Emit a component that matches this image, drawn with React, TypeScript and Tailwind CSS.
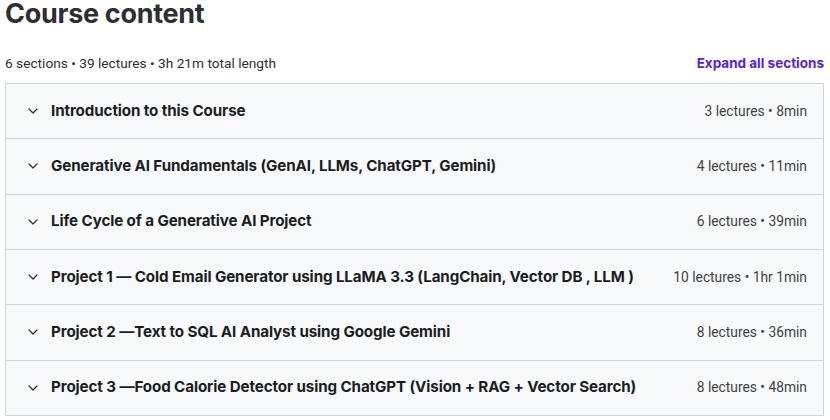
import React from 'react';

const sections = [
  { title: 'Introduction to this Course', meta: '3 lectures • 8min' },
  { title: 'Generative AI Fundamentals (GenAI, LLMs, ChatGPT, Gemini)', meta: '4 lectures • 11min' },
  { title: 'Life Cycle of a Generative AI Project', meta: '6 lectures • 39min' },
  { title: 'Project 1 — Cold Email Generator using LLaMA 3.3 (LangChain, Vector DB , LLM )', meta: '10 lectures • 1hr 1min' },
  { title: 'Project 2 —Text to SQL AI Analyst using Google Gemini', meta: '8 lectures • 36min' },
  { title: 'Project 3 —Food Calorie Detector using ChatGPT (Vision + RAG + Vector Search)', meta: '8 lectures • 48min' },
];

function Chevron() {
  return (
    <svg width="10" height="6" viewBox="0 0 10 6" fill="none" className="shrink-0">
      <path d="M1 1l4 4 4-4" stroke="#2d2f31" strokeWidth="1.2" strokeLinecap="round" strokeLinejoin="round" />
    </svg>
  );
}

export default function App() {
  return (
    <div className="w-[830px] h-[420px] overflow-hidden bg-white pl-[5px] pr-[6px] text-[#2d2f31]" style={{ fontFamily: 'Inter, "Noto Sans", sans-serif' }}>
      <h2 className="text-[27px] font-bold leading-[28px] tracking-[-0.3px]">Course content</h2>
      <div className="flex items-end justify-between mt-[26px] mb-[11px]">
        <span className="text-[13.7px] leading-[18px] text-[#2d2f31]" style={{ fontFamily: 'Roboto, sans-serif' }}>6 sections • 39 lectures • 3h 21m total length</span>
        <button className="text-[13.5px] leading-[18px] font-bold text-[#5624d0]">Expand all sections</button>
      </div>
      <div className="border-b border-[#d1d7dc]">
        {sections.map((s) => (
          <div key={s.title} className="h-[55.33px] flex items-center border-t border-x border-[#d1d7dc] bg-[#f7f9fa] pl-[22px] pr-[16px]">
            <Chevron />
            <span className="ml-[13px] flex-1 text-[15.15px] font-bold truncate tracking-[-0.1px] text-[#1c1d1f]">{s.title}</span>
            <span className="text-[13.8px] text-[#3e4143] whitespace-nowrap" style={{ fontFamily: 'Roboto, sans-serif' }}>{s.meta}</span>
          </div>
        ))}
      </div>
    </div>
  );
}
